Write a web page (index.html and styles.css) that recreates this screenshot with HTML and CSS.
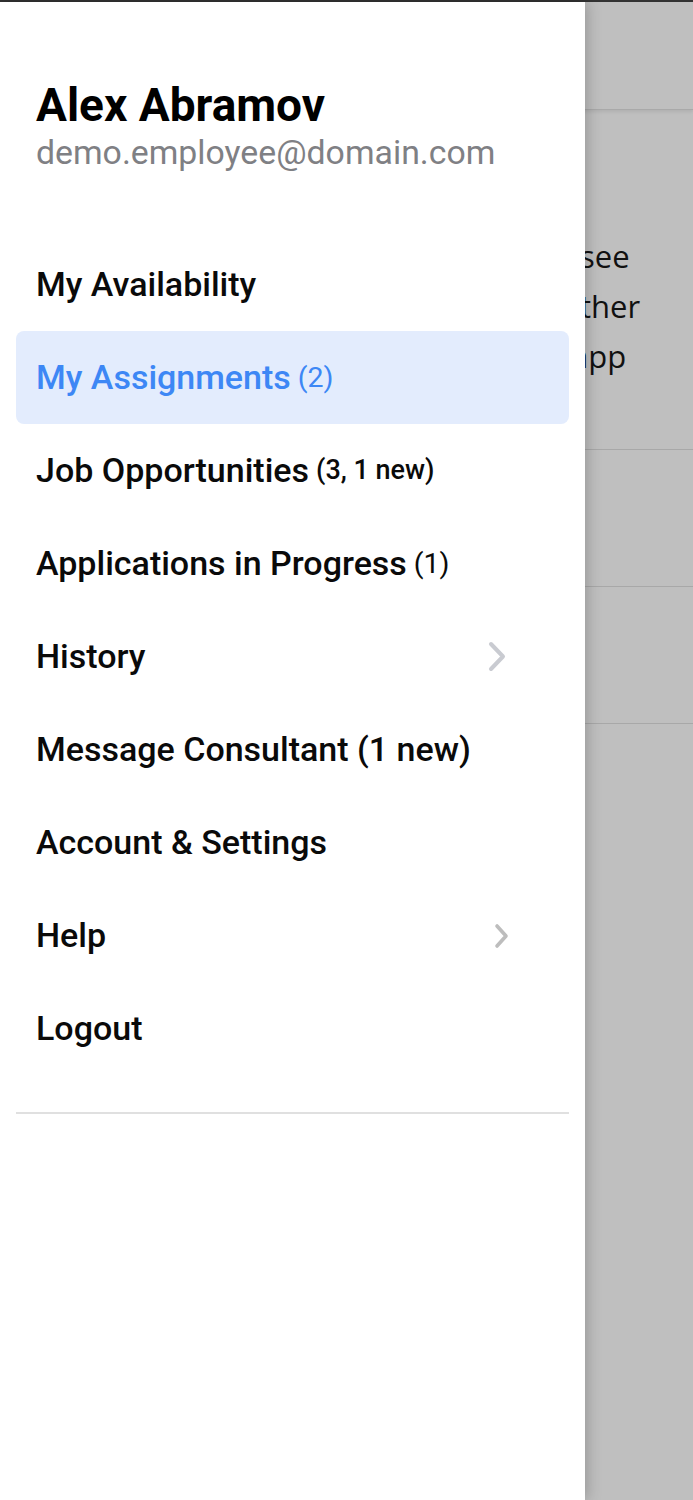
FILE: index.html
```html
<!doctype html>
<html>
<head>
<meta charset="utf-8">
<title>Menu</title>
<link rel="stylesheet" href="styles.css">
</head>

<body>
<div class="screen">
		<div class="page">
				<div class="page-bar"></div>
				<div class="page-intro">
						<p>see</p>
						<p>ther</p>
						<p class="cut">app</p>
				</div>
				<div class="page-row"></div>
				<div class="page-row"></div>
		</div>

		<div class="drawer">
				<div class="user">
						<div class="user-name">Alex Abramov</div>
						<div class="user-mail">demo.employee@domain.com</div>
				</div>
				<ul class="menu">
						<li>My Availability</li>
						<li class="active">My Assignments <span class="count">(2)</span></li>
						<li>Job Opportunities <span class="count small">(3, 1 new)</span></li>
						<li>Applications in Progress <span class="count">(1)</span></li>
						<li class="sub">History
								<svg class="chev" width="18" height="31" viewBox="0 0 18 31"><polyline points="3,3 15,15.5 3,28" /></svg>
						</li>
						<li>Message Consultant (1 new)</li>
						<li>Account &amp; Settings</li>
						<li class="sub">Help
								<svg class="chev chev-sm" width="15" height="26" viewBox="0 0 15 26"><polyline points="3,3 12,13 3,23" /></svg>
						</li>
						<li>Logout</li>
				</ul>
				<div class="divider"></div>
		</div>
</div>
</body>
</html>
```

FILE: styles.css
```css
* { margin:0; padding:0; box-sizing:border-box; }
body { width:693px; height:1500px; overflow:hidden; background:#bfbfbf; font-family:Roboto, "Noto Sans", sans-serif; }

.screen { position:relative; height:1500px; border-top:2px solid #333; }

/* page under the dimmed overlay */
.page { height:100%; background:#bfbfbf; }
.page-bar { height:108px; border-bottom:1px solid #a9a9a9; box-shadow:0 2px 3px rgba(0,0,0,.08); }
.page-intro { height:340px; padding:121px 0 0 580px; border-bottom:1px solid #a8a8a8; font-family:"Open Sans", sans-serif; font-size:31px; line-height:50px; color:#111; }
.page-intro .cut { margin-left:-9px; }
.page-row { height:137px; border-bottom:1px solid #a8a8a8; }

/* drawer */
.drawer { position:absolute; top:0; left:0; width:585px; height:100%; background:#fff; box-shadow:2px 0 14px rgba(0,0,0,.22); }

.user { padding:76px 0 0 36px; }
.user-name { font-size:46px; font-weight:700; line-height:54px; color:#000; }
.user-mail { font-size:33.8px; line-height:40px; color:#7f8084; margin-top:1px; }

.menu { list-style:none; margin-top:65px; }
.menu li { display:flex; align-items:center; height:93px; margin:0 16px; padding-left:20px; font-size:34px; font-weight:500; color:#0a0a0a; line-height:93px; border-radius:8px; white-space:nowrap; }
.menu .count { font-size:28.5px; font-weight:400; margin-left:7px; }
.menu .count.small { font-size:27px; font-weight:500; }
.menu .active { background:#e3ecfd; color:#3d87f5; }
.menu .active .count { color:#3d87f5; }

.menu .sub { justify-content:space-between; padding-right:63px; }
.chev polyline { fill:none; stroke:#c9cbd1; stroke-width:4; stroke-linecap:round; stroke-linejoin:round; }
.chev-sm { margin-right:-3px; }
.chev-sm polyline { stroke:#bdbdbd; stroke-width:3.6; }

.divider { height:2px; margin:37px 16px 0; background:#e0e0e0; }
```
